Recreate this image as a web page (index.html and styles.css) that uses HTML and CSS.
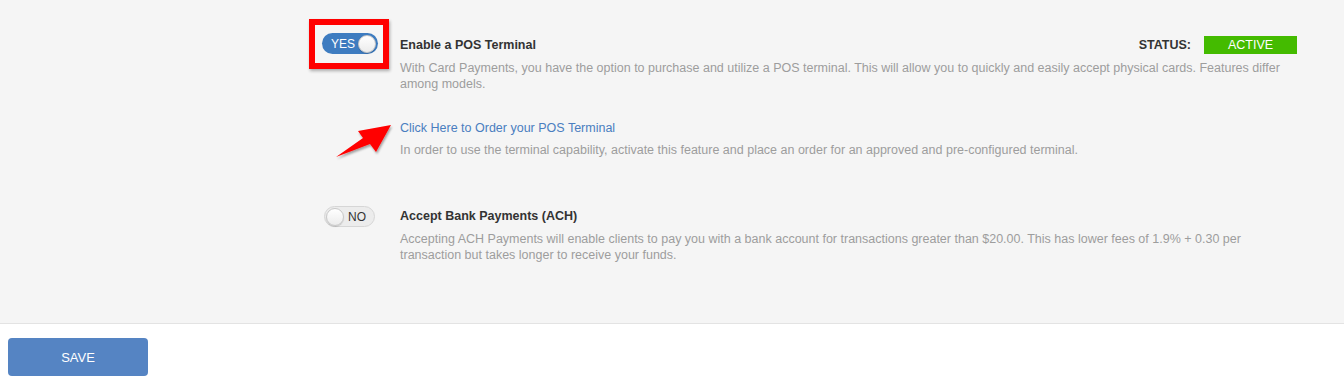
FILE: index.html
```html
<!DOCTYPE html>
<html>
<head>
<meta charset="utf-8">
<link rel="stylesheet" href="styles.css">
</head>
<body>
<div class="panel">
  <div class="row row-pos">
    <div class="toggle-cell">
      <div class="highlight">
        <div class="toggle on"><span class="toggle-label">YES</span><span class="knob"></span></div>
      </div>
    </div>
    <div class="content">
      <div class="header">
        <span class="title">Enable a POS Terminal</span>
        <span class="status"><span class="status-label">STATUS:</span><span class="badge">ACTIVE</span></span>
      </div>
      <p class="desc">With Card Payments, you have the option to purchase and utilize a POS terminal. This will allow you to quickly and easily accept physical cards. Features differ among models.</p>
      <div class="order">
        <a class="link" href="#">Click Here to Order your POS Terminal</a>
        <p class="desc desc-order">In order to use the terminal capability, activate this feature and place an order for an approved and pre-configured terminal.</p>
        <svg class="arrow" width="70" height="50" viewBox="0 0 70 50">
          <defs>
            <filter id="sh" x="-20%" y="-20%" width="140%" height="160%">
              <feDropShadow dx="1" dy="2" stdDeviation="1.2" flood-color="#000" flood-opacity="0.35"/>
            </filter>
          </defs>
          <polygon filter="url(#sh)" fill="#ff0000" points="4,40 31,21 26,14 59,8 44,35 38,27"/>
        </svg>
      </div>
    </div>
  </div>
  <div class="row row-ach">
    <div class="toggle-cell">
      <div class="toggle off"><span class="knob"></span><span class="toggle-label">NO</span></div>
    </div>
    <div class="content">
      <div class="header">
        <span class="title">Accept Bank Payments (ACH)</span>
      </div>
      <p class="desc">Accepting ACH Payments will enable clients to pay you with a bank account for transactions greater than $20.00. This has lower fees of 1.9% + 0.30 per transaction but takes longer to receive your funds.</p>
    </div>
  </div>
</div>
<div class="footer">
  <button class="save">SAVE</button>
</div>
</body>
</html>
```
FILE: styles.css
```css
* { box-sizing: border-box; }
html, body { margin: 0; padding: 0; background: #fff; }
body { font-family: "Liberation Sans", Arial, sans-serif; font-size: 12.5px; color: #333; }

.panel {
  background: #f5f5f5;
  border-bottom: 1px solid #e3e3e3;
  padding: 19px 47px 60px 309px;
}

.row { display: flex; }
.row-ach { margin-top: 48px; }

.toggle-cell { width: 91px; flex: none; }
.row-ach .toggle-cell { padding-left: 15px; }

.highlight {
  width: 80px;
  height: 50px;
  border: 6px solid #ff0000;
  box-shadow: 1px 2px 3px rgba(0,0,0,0.3);
  padding: 8px 0 0 7px;
}

.toggle {
  width: 56px;
  height: 21px;
  border-radius: 11px;
  display: flex;
  align-items: center;
  font-size: 12px;
}
.toggle.on {
  background: #3e7cc0;
  color: #fff;
  padding: 0 2px 0 9px;
  justify-content: space-between;
}
.toggle.off {
  width: 51px;
  background: #ececec;
  border: 1px solid #d6d6d6;
  color: #333;
  padding: 0 8px 0 1px;
  justify-content: space-between;
}
.knob {
  width: 18px;
  height: 18px;
  border-radius: 50%;
  background: linear-gradient(#ffffff, #ececec);
  border: 1px solid #c8c8c8;
  box-shadow: 0 1px 1px rgba(0,0,0,0.15);
}

.content { flex: 1; min-width: 0; padding-top: 16px; }
.row-ach .content { padding-top: 0; }

.header {
  display: flex;
  justify-content: space-between;
  align-items: center;
  height: 20px;
}
.title { font-weight: bold; color: #333; }
.status { display: flex; align-items: center; }
.status-label { font-weight: bold; color: #333; margin-right: 13px; }
.badge {
  width: 93px;
  height: 18px;
  line-height: 18px;
  background: #44bb00;
  color: #fff;
  text-align: center;
  font-size: 12.5px;
}

.desc {
  margin: 5px 8px 0 0;
  line-height: 16px;
  color: #9d9d9d;
}

.order { margin-top: 28px; position: relative; }
.link { color: #4a7ec0; text-decoration: none; line-height: 16px; display: block; }
.desc-order { margin-top: 6px; }
.arrow { position: absolute; left: -68px; top: -3px; }

.footer { padding: 14px 8px; }
.save {
  width: 140px;
  height: 38px;
  border: none;
  border-radius: 4px;
  background: #5584c3;
  color: #fff;
  font-family: "Liberation Sans", Arial, sans-serif;
  font-size: 13px;
}
```
